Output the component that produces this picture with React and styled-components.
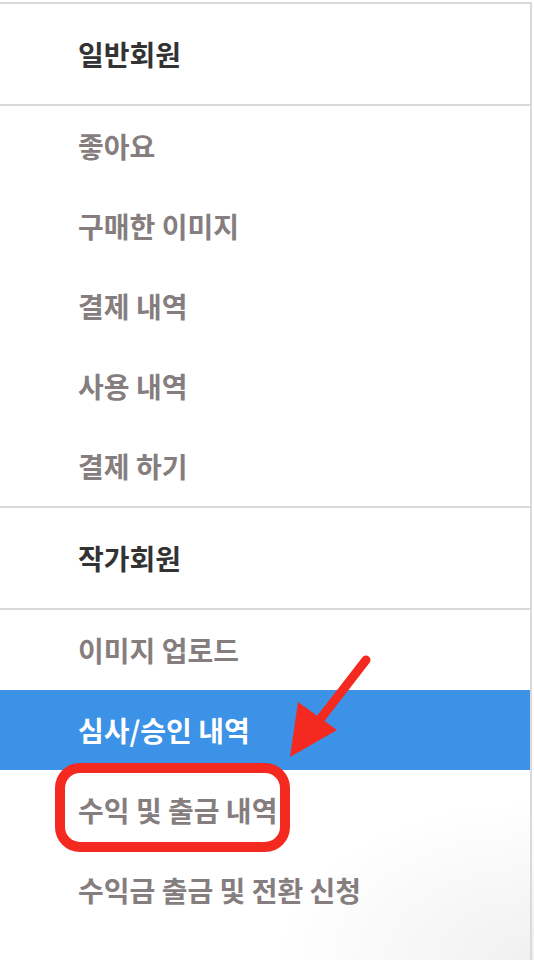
import React from "react";
import styled, { createGlobalStyle } from "styled-components";

const GlobalStyle = createGlobalStyle`
  html, body {
    margin: 0;
    padding: 0;
    background: #ffffff;
  }
  body {
    font-family: "Noto Sans CJK KR", "Noto Sans", sans-serif;
  }
`;

const Page = styled.div`
  position: relative;
  width: 534px;
  height: 960px;
  overflow: hidden;
  padding-top: 2px;
  box-sizing: border-box;
  background: radial-gradient(
    ellipse 260px 160px at 534px 960px,
    rgba(0, 0, 0, 0.06),
    rgba(0, 0, 0, 0) 100%
  );
`;

const Sidebar = styled.nav`
  width: 532px;
  min-height: 958px;
  box-sizing: border-box;
  border-right: 2px solid #dadada;
`;

const Section = styled.div`
  display: flex;
  flex-direction: column;
`;

const Heading = styled.div`
  height: 100px;
  display: flex;
  align-items: center;
  padding-left: 78px;
  border-top: 2px solid #d9d9d9;
  border-bottom: 2px solid #d9d9d9;
  font-size: 28px;
  font-weight: 700;
  color: #333333;
`;

const Item = styled.a`
  height: 80px;
  display: flex;
  align-items: center;
  padding-left: 78px;
  font-size: 28px;
  font-weight: 700;
  text-decoration: none;
  color: ${(p) => (p.$active ? "#ffffff" : "#857d7e")};
  background: ${(p) => (p.$active ? "#3b92e6" : "transparent")};
`;

const Annotation = styled.svg`
  position: absolute;
  left: 0;
  top: 0;
  pointer-events: none;
`;

const sections = [
  {
    title: "일반회원",
    items: ["좋아요", "구매한 이미지", "결제 내역", "사용 내역", "결제 하기"],
  },
  {
    title: "작가회원",
    items: ["이미지 업로드", "심사/승인 내역", "수익 및 출금 내역", "수익금 출금 및 전환 신청"],
  },
];

const App = () => {
  return (
    <>
      <GlobalStyle />
      <Page>
        <Sidebar>
          {sections.map((section) => (
            <Section key={section.title}>
              <Heading>{section.title}</Heading>
              {section.items.map((label) => (
                <Item key={label} $active={label === "심사/승인 내역"}>
                  {label}
                </Item>
              ))}
            </Section>
          ))}
        </Sidebar>
        <Annotation width="534" height="960" viewBox="0 0 534 960">
          <rect
            x="60"
            y="768"
            width="225"
            height="79"
            rx="20"
            fill="none"
            stroke="#f4291f"
            strokeWidth="10"
          />
          <line
            x1="366"
            y1="660"
            x2="318"
            y2="722"
            stroke="#f4291f"
            strokeWidth="9"
            strokeLinecap="round"
          />
          <polygon points="290,757 298,702 337,730" fill="#f4291f" />
        </Annotation>
      </Page>
    </>
  );
};

export default App;
